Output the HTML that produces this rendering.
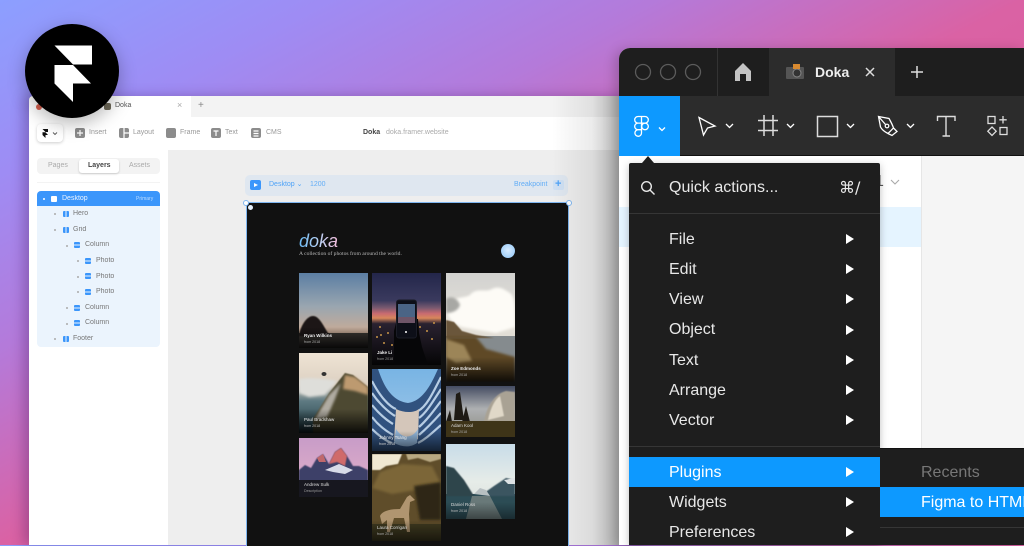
<!DOCTYPE html>
<html><head><meta charset="utf-8"><style>
html,body{margin:0;padding:0}
body{width:1024px;height:545px;overflow:hidden;position:relative;font-family:"Liberation Sans",sans-serif;background:linear-gradient(to bottom right,#8c9fff 0%,#9e8cf4 16%,#b47ada 32%,#da62a4 50%,#e0508f 100%)}
.a{position:absolute}
.t{position:absolute;white-space:nowrap;line-height:1}
.m{position:absolute;left:669px;font-size:16px;color:#e8e8e8;line-height:20px;white-space:nowrap}
.ar{position:absolute;left:846px;width:0;height:0;border-left:8px solid #fff;border-top:5px solid transparent;border-bottom:5px solid transparent}
.l{position:absolute;font-size:7px;color:#777;line-height:8px;white-space:nowrap;filter:blur(.3px)}
.d{position:absolute;width:2px;height:2px;border-radius:50%;background:#aaa}
.i{position:absolute;width:6px;height:6px;border-radius:1px;background:#3b96fb}
.v{background:linear-gradient(90deg,#3b96fb 2.5px,#ebf4fd 2.5px,#ebf4fd 3.5px,#3b96fb 3.5px)}
.h{background:linear-gradient(180deg,#3b96fb 2.5px,#ebf4fd 2.5px,#ebf4fd 3.5px,#3b96fb 3.5px)}
.tb{position:absolute;top:128px;width:10px;height:10px;background:#8c8c8c;border-radius:2px}
.tt{position:absolute;top:129px;font-size:7px;line-height:8px;color:#999;white-space:nowrap;filter:blur(.3px)}
</style></head><body>

<!-- left window -->
<div class="a" style="left:29px;top:96px;width:620px;height:449px;background:#fff;box-shadow:-6px 0 12px rgba(60,20,90,.3);border-radius:4px 0 0 0;overflow:hidden">
  <div class="a" style="left:162px;top:0;width:458px;height:21px;background:#f3f3f3"></div>
  <div class="a" style="left:139px;top:54px;width:481px;height:395px;background:#eeeeee"></div>
  <div class="a" style="left:0;top:21px;width:620px;height:33px;background:#fff"></div>
</div>
<div class="a" style="left:36px;top:104px;width:6px;height:6px;border-radius:50%;background:#d8604f"></div>
<div class="t" style="left:115px;top:102px;font-size:7px;color:#555">Doka</div>
<div class="a" style="left:104px;top:103px;width:7px;height:7px;background:#6f6a5a;border-radius:2px"></div>
<div class="t" style="left:177px;top:101px;font-size:9px;color:#aaa">×</div>
<div class="t" style="left:198px;top:101px;font-size:10px;color:#888">+</div>

<div class="a" style="left:37px;top:124px;width:26px;height:18px;background:#fff;border-radius:4px;box-shadow:0 1px 3px rgba(0,0,0,.2)"></div>
<svg class="a" style="left:41px;top:129px" width="20" height="10" viewBox="0 0 20 10"><path d="M1.500 0H7V3H4.500ZM1.500 3.200H4.500L7 6H4.500V9L1.500 6Z" fill="#111"/><path d="M12 3.500l2 2 2-2" fill="none" stroke="#555" stroke-width=".9"/></svg>
<div class="tb" style="left:75px"></div><div class="tt" style="left:89px">Insert</div>
<div class="tb" style="left:119px"></div><div class="tt" style="left:133px">Layout</div>
<div class="tb" style="left:166px"></div><div class="tt" style="left:180px">Frame</div>
<div class="tb" style="left:211px"></div><div class="tt" style="left:225px">Text</div>
<div class="tb" style="left:251px"></div><div class="tt" style="left:266px">CMS</div>
<svg class="a" style="left:70px;top:125px" width="200" height="16" viewBox="70 125 200 16" fill="none" stroke="#fff" stroke-width="1.200">
<path d="M80 130V136M77 133H83"/><path d="M124 128V138M124 133H129"/><path d="M213.500 131H218.500M216 131V136"/><path d="M253.500 131H258.500M253.500 133.500H258.500M253.500 136H258.500"/></svg>
<div class="t" style="left:363px;top:129px;font-size:7px;font-weight:bold;color:#444">Doka</div>
<div class="t" style="left:386px;top:129px;font-size:7px;color:#aaa">doka.framer.website</div>

<!-- left sidebar -->
<div class="a" style="left:37px;top:158px;width:123px;height:16px;background:#f3f3f3;border-radius:4px"></div>
<div class="a" style="left:79px;top:159px;width:40px;height:14px;background:#fff;border-radius:3px;box-shadow:0 1px 2px rgba(0,0,0,.18)"></div>
<div class="t" style="left:48px;top:162px;font-size:7px;color:#aaa">Pages</div>
<div class="t" style="left:88px;top:162px;font-size:7px;color:#444;font-weight:bold">Layers</div>
<div class="t" style="left:129px;top:162px;font-size:7px;color:#aaa">Assets</div>
<div class="a" style="left:37px;top:182px;width:123px;height:1px;background:#f3f3f3"></div>
<div class="a" style="left:37px;top:191px;width:123px;height:156px;background:#ebf4fd;border-radius:4px"></div>
<div class="a" style="left:37px;top:191px;width:123px;height:15px;background:#3b96fb;border-radius:4px 4px 0 0"></div>
<div class="d" style="left:43px;top:198px;background:#fff"></div>
<div class="a" style="left:51px;top:196px;width:6px;height:6px;background:#fff;border-radius:1px"></div>
<div class="l" style="left:62px;top:195px;color:#eaf3ff">Desktop</div>
<div class="l" style="left:136px;top:195px;color:#bcdcff;font-size:5px">Primary</div>

<div class="d" style="left:54px;top:213px"></div><div class="i v" style="left:63px;top:211px"></div><div class="l" style="left:73px;top:210px">Hero</div>
<div class="d" style="left:54px;top:229px"></div><div class="i v" style="left:63px;top:227px"></div><div class="l" style="left:73px;top:226px">Grid</div>
<div class="d" style="left:66px;top:245px"></div><div class="i h" style="left:74px;top:242px"></div><div class="l" style="left:85px;top:241px">Column</div>
<div class="d" style="left:77px;top:260px"></div><div class="i h" style="left:85px;top:258px"></div><div class="l" style="left:96px;top:257px">Photo</div>
<div class="d" style="left:77px;top:276px"></div><div class="i h" style="left:85px;top:273px"></div><div class="l" style="left:96px;top:273px">Photo</div>
<div class="d" style="left:77px;top:291px"></div><div class="i h" style="left:85px;top:289px"></div><div class="l" style="left:96px;top:288px">Photo</div>
<div class="d" style="left:66px;top:307px"></div><div class="i h" style="left:74px;top:305px"></div><div class="l" style="left:85px;top:304px">Column</div>
<div class="d" style="left:66px;top:323px"></div><div class="i h" style="left:74px;top:320px"></div><div class="l" style="left:85px;top:319px">Column</div>
<div class="d" style="left:54px;top:338px"></div><div class="i v" style="left:63px;top:336px"></div><div class="l" style="left:73px;top:335px">Footer</div>

<!-- canvas header -->
<div class="a" style="left:245px;top:175px;width:323px;height:21px;background:#dfe7f0;border-radius:5px"></div>
<div class="a" style="left:250px;top:180px;width:11px;height:10px;background:#3b96fb;border-radius:2px"></div>
<div class="a" style="left:254px;top:183px;width:0;height:0;border-left:4px solid #fff;border-top:2.5px solid transparent;border-bottom:2.5px solid transparent"></div>
<div class="t" style="left:269px;top:181px;font-size:7px;color:#4fa3f7">Desktop ⌄</div>
<div class="t" style="left:310px;top:181px;font-size:7px;color:#62adf6">1200</div>
<div class="t" style="left:514px;top:181px;font-size:7px;color:#62adf6">Breakpoint</div>
<div class="a" style="left:553px;top:180px;width:11px;height:10px;background:#cfe0f3;border-radius:2px"></div>
<div class="t" style="left:555px;top:179px;font-size:11px;color:#4fa3f7;font-weight:bold">+</div>

<!-- frame -->
<div class="a" style="left:246px;top:202px;width:321px;height:343px;background:#111;border:1px solid #7fb6f0;border-bottom:0"></div>
<div class="a" style="left:243px;top:200px;width:4px;height:4px;border-radius:50%;background:#fff;border:1px solid #7fb6f0"></div>
<div class="a" style="left:566px;top:200px;width:4px;height:4px;border-radius:50%;background:#fff;border:1px solid #7fb6f0"></div>
<div class="a" style="left:248px;top:205px;width:5px;height:5px;border-radius:50%;background:#e6f0fb"></div>
<div class="t" style="left:299px;top:232px;font-size:18px;font-style:italic;background:linear-gradient(90deg,#6cbdf8,#b8d2f6 50%,#f4bedc);-webkit-background-clip:text;background-clip:text;color:transparent">doka</div>
<div class="t" style="left:299px;top:252px;font-family:'Liberation Serif',serif;font-size:5.6px;color:#b8b8b8">A collection of photos from around the world.</div>
<div class="a" style="left:501px;top:244px;width:14px;height:14px;border-radius:50%;background:radial-gradient(circle at 50% 45%,#d8ecff,#8cc4f6)"></div>

<svg class="a" style="left:0;top:0" width="1024" height="545" viewBox="0 0 1024 545">
<defs>
<linearGradient id="g1" x1="0" y1="0" x2="0" y2="1"><stop offset="0" stop-color="#5b7ea3"/><stop offset=".45" stop-color="#9aa6b0"/><stop offset=".78" stop-color="#c7ab97"/><stop offset="1" stop-color="#8c7c70"/></linearGradient>
<linearGradient id="g2" x1="0" y1="0" x2="0" y2="1"><stop offset="0" stop-color="#23264a"/><stop offset=".3" stop-color="#3a3a5e"/><stop offset=".38" stop-color="#7a5a70"/><stop offset=".44" stop-color="#c86a70"/><stop offset=".49" stop-color="#d8875c"/><stop offset=".55" stop-color="#2a2230"/><stop offset="1" stop-color="#050506"/></linearGradient>
<linearGradient id="g3" x1="0" y1="0" x2="0" y2="1"><stop offset="0" stop-color="#d2d2d0"/><stop offset=".5" stop-color="#e6e2da"/><stop offset="1" stop-color="#c8c4bc"/></linearGradient>
<linearGradient id="g4" x1="0" y1="0" x2="0" y2="1"><stop offset="0" stop-color="#efe4d4"/><stop offset=".4" stop-color="#dcd0c2"/><stop offset=".6" stop-color="#5e7a82"/><stop offset="1" stop-color="#1e3a42"/></linearGradient>
<linearGradient id="g5" x1="0" y1="0" x2="0" y2="1"><stop offset="0" stop-color="#78b4e4"/><stop offset="1" stop-color="#a8cbe8"/></linearGradient>
<linearGradient id="g8" x1="0" y1="0" x2="0" y2="1"><stop offset="0" stop-color="#c89cc8"/><stop offset=".55" stop-color="#d8a8c8"/><stop offset="1" stop-color="#8888b0"/></linearGradient>
<linearGradient id="g9" x1="0" y1="0" x2="0" y2="1"><stop offset="0" stop-color="#c8dce8"/><stop offset=".5" stop-color="#e6ece8"/><stop offset="1" stop-color="#d8dcd8"/></linearGradient>
<linearGradient id="g7" x1="0" y1="0" x2="0" y2="1"><stop offset="0" stop-color="#444c62"/><stop offset=".45" stop-color="#aeb0b2"/><stop offset="1" stop-color="#8a8a80"/></linearGradient>
<linearGradient id="sh" x1="0" y1="0" x2="0" y2="1"><stop offset="0" stop-color="#000" stop-opacity="0"/><stop offset="1" stop-color="#000" stop-opacity=".85"/></linearGradient>
<filter id="bl" x="-10%" y="-10%" width="120%" height="120%"><feGaussianBlur stdDeviation=".6"/></filter>
<filter id="bl2" x="-20%" y="-20%" width="140%" height="140%"><feGaussianBlur stdDeviation="1.400"/></filter>
</defs>

<!-- p1 -->
<svg x="299" y="273" width="69" height="75" viewBox="0 0 69 75">
<rect width="69" height="75" fill="url(#g1)"/>
<rect y="60" width="69" height="15" fill="#3c3834"/>
<path d="M0 62C2 52 8 43 14 43C20 43 24 52 29 60L32 63H0Z" fill="#1c1712" filter="url(#bl)"/>
<rect y="54" width="69" height="21" fill="url(#sh)"/>
<text x="5" y="64" font-size="4.500" fill="#eee" font-weight="bold">Ryan Wilkins</text><text x="5" y="70" font-size="3.600" fill="#aaa">from 2018</text></svg>

<!-- p2 -->
<svg x="372" y="273" width="69" height="92" viewBox="0 0 69 92">
<rect width="69" height="92" fill="url(#g2)"/>
<g fill="#c89548"><circle cx="8" cy="54" r="1"/><circle cx="16" cy="60" r="1"/><circle cx="25" cy="52" r="1"/><circle cx="55" cy="58" r="1"/><circle cx="62" cy="50" r="1"/><circle cx="12" cy="70" r="1"/><circle cx="5" cy="64" r="1"/><circle cx="60" cy="66" r="1"/><circle cx="48" cy="54" r="1"/><circle cx="20" cy="72" r="1"/><circle cx="9" cy="62" r="1"/></g>
<path d="M22 92V58L25 46H46L47 60L50 74L56 92Z" fill="#060608"/>
<rect x="24.500" y="27" width="20" height="38" rx="2.500" fill="#0d0f18" stroke="#1a1c26"/>
<rect x="26" y="31" width="17" height="13" fill="#4a6485"/><rect x="26" y="44" width="17" height="6" fill="#6e5568"/>
<circle cx="34" cy="59" r="1" fill="#fff"/>
<text x="5" y="81" font-size="4.500" fill="#eee" font-weight="bold">Jake Li</text><text x="5" y="87" font-size="3.600" fill="#999">from 2018</text></svg>

<!-- p3 -->
<svg x="446" y="273" width="69" height="109" viewBox="0 0 69 109">
<rect width="69" height="109" fill="url(#g3)"/>
<path d="M2 34C8 22 18 26 24 22C30 14 40 20 46 16C54 12 60 18 64 20C69 24 69 34 69 54L50 60L16 54C6 50 0 44 2 34Z" fill="#fdfbf6" filter="url(#bl2)"/>
<path d="M0 26C6 22 12 26 14 32C12 38 6 40 0 40Z" fill="#a8a8a4" filter="url(#bl2)"/>
<rect y="63" width="69" height="46" fill="#858b8e"/>
<path d="M0 47L8 49L16 58L30 62L48 65H0Z" fill="#6a563a" filter="url(#bl)"/>
<path d="M0 64H30L40 76L69 84V109H0Z" fill="#5f4a26" filter="url(#bl2)"/>
<path d="M0 66L18 72L26 88L10 90L0 84Z" fill="#9c8558" filter="url(#bl2)"/>
<rect y="84" width="69" height="25" fill="url(#sh)"/>
<text x="5" y="97" font-size="4.500" fill="#eee" font-weight="bold">Zoe Edmonds</text><text x="5" y="103" font-size="3.600" fill="#aaa">from 2018</text></svg>

<!-- p4 -->
<svg x="299" y="353" width="69" height="80" viewBox="0 0 69 80">
<rect width="69" height="80" fill="url(#g4)"/>
<path d="M14 66L30 40L46 20L54 22L69 34V80H14Z" fill="#4e4a30" filter="url(#bl)"/>
<path d="M16 66L30 42L42 30L36 46L28 64Z" fill="#b0aca2" filter="url(#bl2)"/>
<path d="M46 22L56 24L69 34V42L56 38L44 36Z" fill="#bd9a70" filter="url(#bl2)"/>
<path d="M0 26C12 24 26 26 38 28L26 42L10 44L0 40Z" fill="#dededa" filter="url(#bl2)"/>
<ellipse cx="25" cy="21" rx="2.500" ry="2" fill="#333"/><rect y="56" width="69" height="24" fill="url(#sh)"/>
<text x="5" y="68" font-size="4.500" fill="#eee">Paul Bradshaw</text><text x="5" y="74" font-size="3.600" fill="#bbb">from 2018</text></svg>

<!-- p5 -->
<svg x="372" y="369" width="69" height="82" viewBox="0 0 69 82">
<rect width="69" height="82" fill="url(#g5)"/>
<path d="M0 0H6C12 18 20 32 36 34C50 32 58 18 66 0H69V82H0Z" fill="#31527f"/>
<g fill="none" stroke="#b7cde4" stroke-width="2.200">
<path d="M0 12C8 28 18 38 24 40"/><path d="M0 24C8 36 18 44 23 47"/><path d="M0 36C8 46 16 52 21 55"/><path d="M0 48C6 56 14 62 21 66"/><path d="M0 60C6 66 14 72 20 74"/>
<path d="M69 8C60 26 54 38 46 42"/><path d="M69 20C60 34 54 44 47 49"/><path d="M69 32C60 44 54 52 47 58"/><path d="M69 44C60 54 54 60 47 66"/><path d="M69 56C60 64 54 70 46 74"/>
</g>
<path d="M24 40C32 44 42 44 47 40L46 70C40 76 30 76 22 72Z" fill="#d4c6ba"/>
<path d="M24 60C30 70 40 70 46 60L45 74C38 79 30 78 22 74Z" fill="#90b4d8"/>
<rect y="62" width="69" height="20" fill="url(#sh)" opacity=".7"/>
<text x="7" y="70" font-size="4.500" fill="#eee">Johnny Tsang</text><text x="7" y="76" font-size="3.600" fill="#ccc">from 2018</text></svg>

<!-- p6 -->
<svg x="372" y="454" width="69" height="87" viewBox="0 0 69 87">
<rect width="69" height="87" fill="#5f4d2a"/>
<path d="M0 0H30L26 10L14 12L8 16H0Z" fill="#f0e8d2" filter="url(#bl)"/>
<path d="M34 0H69V5L58 8L46 4L36 6Z" fill="#b8a882" filter="url(#bl)"/>
<path d="M8 18L30 10L60 12L69 30V40L44 36L20 40L0 34Z" fill="#7b6638" filter="url(#bl2)"/>
<path d="M42 32L69 28V66L48 66Z" fill="#2f2612" filter="url(#bl2)"/>
<rect y="70" width="69" height="17" fill="#3f3a20"/>
<path d="M8 62C10 57 18 55 28 55L35 43L38 41L43 46L38 48L37 60L38 78H35L32 64L22 64L18 78H15L15 66L10 70Z" fill="#b09570"/>
<rect y="66" width="69" height="21" fill="url(#sh)" opacity=".7"/>
<text x="5" y="75" font-size="4.500" fill="#ddd">Laura Corrigan</text><text x="5" y="81" font-size="3.600" fill="#aaa">from 2018</text></svg>

<!-- p7 -->
<svg x="446" y="386" width="69" height="51" viewBox="0 0 69 51">
<rect width="69" height="51" fill="url(#g7)"/>
<path d="M38 36C40 22 48 8 60 5L69 6V36Z" fill="#a9a294" filter="url(#bl)"/>
<path d="M42 34C44 24 48 14 54 10L58 30Z" fill="#e0d8c8" filter="url(#bl)"/>
<path d="M8 34L10 8L14 6L18 34ZM16 36L20 20L24 36ZM0 36L4 24L6 36Z" fill="#1e1a14"/>
<rect y="35" width="69" height="16" fill="#3e3418"/>
<text x="5" y="41" font-size="4.500" fill="#ddd">Adam Kool</text><text x="5" y="47" font-size="3.600" fill="#aaa">from 2018</text></svg>

<!-- p8 -->
<svg x="299" y="438" width="69" height="59" viewBox="0 0 69 59">
<rect width="69" height="59" fill="url(#g8)"/>
<path d="M0 32L6 27L12 30L18 20L24 16L30 26L36 14L42 10L48 18L54 28L60 28L69 32V48H0Z" fill="#3e3f68" filter="url(#bl)"/>
<path d="M30 26L36 14L42 10L48 18L46 28L38 24Z" fill="#d06a6a" filter="url(#bl)"/>
<path d="M18 20L24 16L27 24H20Z" fill="#c0686c"/>
<path d="M26 32L40 26L54 32L46 36L34 34Z" fill="#d8dbe8"/>
<rect y="42" width="69" height="17" fill="#17171f"/>
<text x="5" y="48" font-size="4.500" fill="#ddd">Andrew Sulk</text><text x="5" y="54" font-size="3.600" fill="#999">Description</text></svg>

<!-- p9 -->
<svg x="446" y="444" width="69" height="75" viewBox="0 0 69 75">
<rect width="69" height="75" fill="url(#g9)"/>
<rect y="50" width="69" height="25" fill="#2c4c55"/>
<path d="M0 22L8 24L18 36L28 52H0Z" fill="#2e444c" filter="url(#bl)"/>
<path d="M34 52L48 42L60 34L69 36V52Z" fill="#3a5560" filter="url(#bl)"/>
<path d="M28 50L34 44L40 46L44 52Z" fill="#b8c0c2"/>
<path d="M58 36L69 34V40L62 40Z" fill="#dde2e4"/>
<path d="M26 52H44L56 75H20Z" fill="#7e8886" opacity=".75"/>
<rect y="58" width="69" height="17" fill="url(#sh)" opacity=".5"/>
<text x="5" y="62" font-size="4.500" fill="#ddd">Daniel Ross</text><text x="5" y="68" font-size="3.600" fill="#bbb">from 2018</text></svg>
</svg>

<!-- framer logo -->
<div class="a" style="left:25px;top:24px;width:94px;height:94px;border-radius:50%;background:#000;box-shadow:0 6px 18px rgba(0,0,0,.28)"></div>
<svg class="a" style="left:0;top:0" width="130" height="120" viewBox="0 0 130 120"><path d="M54.500 45.500H92V64.500H73ZM54.500 65H73L91 83.500H73V102L54.500 83.500Z" fill="#fff"/></svg>

<!-- shadow cast on left window -->
<div class="a" style="left:552px;top:96px;width:67px;height:449px;background:linear-gradient(90deg,rgba(0,0,0,0),rgba(0,0,0,.08) 60%,rgba(0,0,0,.28))"></div>

<!-- figma window -->
<div class="a" style="left:619px;top:48px;width:405px;height:497px;background:#fff;border-radius:11px 0 0 0;box-shadow:-4px 2px 12px rgba(0,0,0,.2)"></div>
<div class="a" style="left:619px;top:48px;width:405px;height:48px;background:#1e1e1e;border-radius:11px 0 0 0"></div>
<div class="a" style="left:717px;top:48px;width:1px;height:48px;background:#333"></div>
<div class="a" style="left:769px;top:48px;width:126px;height:48px;background:#2c2c2c"></div>
<div class="a" style="left:619px;top:96px;width:405px;height:60px;background:#2c2c2c;border-bottom:1px solid #111;box-sizing:border-box"></div>
<div class="a" style="left:619px;top:96px;width:61px;height:60px;background:#0d99ff"></div>
<div class="a" style="left:619px;top:156px;width:302px;height:292px;background:#fff"></div>
<div class="a" style="left:921px;top:156px;width:103px;height:292px;background:#f5f5f5;border-left:1px solid #e6e6e6"></div>
<div class="a" style="left:619px;top:207px;width:302px;height:40px;background:#e5f4ff"></div>
<div class="t" style="left:875px;top:174px;font-size:16px;color:#555">1</div>

<svg class="a" style="left:0;top:0" width="1024" height="200" viewBox="0 0 1024 200" fill="none" stroke="#fff" stroke-width="1.300">
<g stroke="#5c5c5c" stroke-width="1.300"><circle cx="643" cy="72" r="7.500"/><circle cx="668" cy="72" r="7.500"/><circle cx="693" cy="72" r="7.500"/></g>
<path d="M743 63L751 71V81H746V74H740V81H735V71Z" fill="#c4c4c4" stroke="none"/>
<rect x="786" y="67" width="18" height="12" rx="1" fill="#555" stroke="none"/><circle cx="797" cy="73" r="4" fill="#333" stroke="#888" stroke-width="1"/><rect x="793" y="64" width="7" height="5" fill="#d88a30" stroke="none"/>
<path d="M866 68L874 76M874 68L866 76" stroke="#ddd" stroke-width="1.500"/>
<path d="M917 66V78M911 72H923" stroke="#ddd" stroke-width="1.500"/>
<!-- figma logo -->
<g stroke-width="1.300"><path d="M641.500 116.500H638a3.300 3.300 0 0 0 0 6.600h3.500ZM641.500 116.500H645a3.300 3.300 0 0 1 0 6.600h-3.500ZM641.500 123.100H638a3.300 3.300 0 0 0 0 6.600h3.500ZM641.500 129.700H638a3.300 3.300 0 1 0 3.500 3.300Z"/><circle cx="645" cy="126.400" r="3.300"/></g>
<path d="M659 127.500l3 3 3-3M726 124l3.500 3.500 3.500-3.500M787 124l3.500 3.500 3.500-3.500M847 124l3.500 3.500 3.500-3.500M907 124l3.500 3.500 3.500-3.500" stroke-width="1.300"/>
<path d="M699 117.500L715 126L707.500 128L703.500 135Z" stroke-width="1.300"/>
<path d="M764 115V136M773 115V136M758 120.500H778M758 130.500H778" stroke="#ddd" stroke-width="1.500"/>
<rect x="817.500" y="116.500" width="20" height="20" stroke="#ddd" stroke-width="1.500"/>
<path d="M878.500 116.500L889 118.500C891 122 892.500 125 893.500 128L888 133.500C885 132 882 130 880.500 127ZM878.500 116.500L885.500 124.500M893.500 128L897 131.500L892 135.500L888 133.500" stroke-width="1.300"/><circle cx="887" cy="126" r="1.800" stroke-width="1.200"/>
<path d="M937.500 121V116.500H955V121M946 116.500V136M942.500 136H950" stroke="#ddd" stroke-width="1.400"/>
<rect x="988" y="116.500" width="7" height="7" stroke="#ddd" stroke-width="1.300"/><path d="M1003 116V123.500M999.300 119.800H1006.700" stroke="#ddd" stroke-width="1.300"/><path d="M992 127L996.200 131.200L992 135.400L987.800 131.200Z" stroke="#ddd" stroke-width="1.300"/><rect x="1000" y="127.500" width="7" height="7" stroke="#ddd" stroke-width="1.300"/>
<path d="M891 180l4 4 4-4" stroke="#aaa" stroke-width="1.100"/>
</svg>
<div class="t" style="left:815px;top:65px;font-size:14px;font-weight:bold;color:#eee">Doka</div>

<!-- menu -->
<div class="a" style="left:629px;top:163px;width:251px;height:382px;background:#1e1e1e;border-radius:2px 2px 0 0;box-shadow:0 2px 8px rgba(0,0,0,.25)"></div>
<div class="a" style="left:642px;top:156px;width:0;height:0;border-left:6px solid transparent;border-right:6px solid transparent;border-bottom:7px solid #1e1e1e"></div>
<svg class="a" style="left:640px;top:180px" width="16" height="16" viewBox="0 0 16 16" fill="none" stroke="#e8e8e8" stroke-width="1.400"><circle cx="6.500" cy="6.500" r="4.800"/><path d="M10 10L14.500 14.500"/></svg>
<div class="m" style="top:178px">Quick actions...</div>
<div class="t" style="left:839px;top:180px;font-size:16px;color:#e8e8e8;font-family:'DejaVu Sans',sans-serif">⌘/</div>
<div class="a" style="left:629px;top:213px;width:251px;height:1px;background:#363636"></div>
<div class="m" style="top:230px">File</div><div class="ar" style="top:234px"></div>
<div class="m" style="top:260px">Edit</div><div class="ar" style="top:264px"></div>
<div class="m" style="top:290px">View</div><div class="ar" style="top:294px"></div>
<div class="m" style="top:320px">Object</div><div class="ar" style="top:325px"></div>
<div class="m" style="top:351px">Text</div><div class="ar" style="top:355px"></div>
<div class="m" style="top:381px">Arrange</div><div class="ar" style="top:385px"></div>
<div class="m" style="top:411px">Vector</div><div class="ar" style="top:415px"></div>
<div class="a" style="left:629px;top:446px;width:251px;height:1px;background:#363636"></div>
<div class="a" style="left:629px;top:457px;width:251px;height:30px;background:#0d99ff"></div>
<div class="m" style="top:463px;color:#fff">Plugins</div><div class="ar" style="top:467px"></div>
<div class="m" style="top:493px">Widgets</div><div class="ar" style="top:497px"></div>
<div class="m" style="top:523px">Preferences</div><div class="ar" style="top:527px"></div>

<!-- submenu -->
<div class="a" style="left:880px;top:448px;width:144px;height:97px;background:#1e1e1e;border-top:1px solid #111;box-sizing:border-box"></div>
<div class="m" style="left:921px;top:463px;color:#777">Recents</div>
<div class="a" style="left:880px;top:487px;width:144px;height:30px;background:#0d99ff"></div>
<div class="m" style="left:921px;top:493px;color:#fff">Figma to HTML</div>
<div class="a" style="left:880px;top:527px;width:144px;height:1px;background:#363636"></div>
</body></html>
